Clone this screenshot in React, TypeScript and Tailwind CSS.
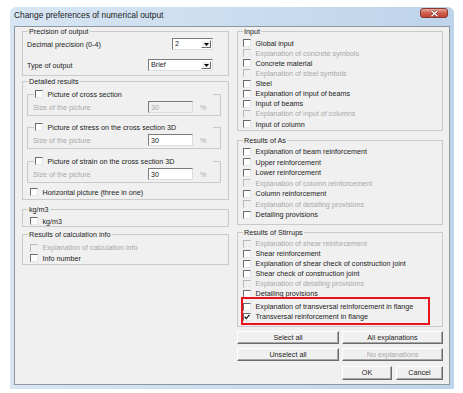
import React from 'react';

const font = "font-['Liberation_Sans',Arial,sans-serif]";

function Box({ checked, disabled }: { checked?: boolean; disabled?: boolean }) {
  const cls = disabled
    ? 'border-t-[#b9b9b9] border-l-[#b9b9b9] border-r-[#ececec] border-b-[#ececec] bg-[#f0f0f0]'
    : 'border-t-[#6b6b6b] border-l-[#6b6b6b] border-r-[#e6e6e6] border-b-[#e6e6e6] bg-white';
  return (
    <span className={`flex h-[8px] w-[8px] shrink-0 items-center justify-center border ${cls}`}>
      {checked && (
        <svg width="6" height="6" viewBox="0 0 6 6">
          <path d="M0.6 2.8 L2.3 4.6 L5.4 0.9" fill="none" stroke="#111" strokeWidth="1.3" />
        </svg>
      )}
    </span>
  );
}

function Check({
  label,
  checked,
  disabled,
  className = '',
}: {
  label: string;
  checked?: boolean;
  disabled?: boolean;
  className?: string;
}) {
  return (
    <div className={`flex items-center ${className}`}>
      <Box checked={checked} disabled={disabled} />
      <span className={`ml-[4.5px] whitespace-nowrap ${disabled ? 'text-[#a8a8a8]' : 'text-[#222]'}`}>{label}</span>
    </div>
  );
}

function Group({ title, className = '', children }: { title: string; className?: string; children: React.ReactNode }) {
  return (
    <fieldset className={`border border-[#cacaca] ${className}`}>
      <legend className="ml-[5px] px-[1px] leading-[9px]">{title}</legend>
      {children}
    </fieldset>
  );
}

function Select({ value, className = '' }: { value: string; className?: string }) {
  return (
    <div
      className={`flex h-[12px] items-stretch border border-t-[#7a7a7a] border-l-[#7a7a7a] border-r-[#dcdcdc] border-b-[#dcdcdc] bg-white ${className}`}
    >
      <span className="flex-1 pl-[2px] leading-[10px]">{value}</span>
      <span className="m-[1px] flex w-[10px] items-center justify-center border border-t-white border-l-white border-r-[#6e6e6e] border-b-[#6e6e6e] bg-[#f0f0f0]">
        <svg width="5" height="3" viewBox="0 0 5 3">
          <path d="M0 0h5L2.5 3z" fill="#000" />
        </svg>
      </span>
    </div>
  );
}

function TextBox({ value, disabled }: { value: string; disabled?: boolean }) {
  return (
    <div
      className={`flex h-[12px] w-[45px] items-center border border-t-[#7a7a7a] border-l-[#7a7a7a] border-r-[#dcdcdc] border-b-[#dcdcdc] pl-[2px] ${
        disabled ? 'bg-[#f0f0f0] text-[#a8a8a8]' : 'bg-white text-[#222]'
      }`}
    >
      {value}
    </div>
  );
}

function SubGroup({ label, disabled, className = '' }: { label: string; disabled?: boolean; className?: string }) {
  return (
    <fieldset className={`border border-[#cacaca] ${className}`}>
      <legend className="ml-[6px] w-[179px] px-[1px]">
        <Check label={label} className="h-[10px]" />
      </legend>
      <div className="mb-[2px] mt-[2px] flex h-[12px] items-center pl-[5px]">
        <span className="w-[115px] text-[#a8a8a8]">Size of the picture</span>
        <TextBox value="30" disabled={disabled} />
        <span className="ml-[7px] text-[#a8a8a8]">%</span>
      </div>
    </fieldset>
  );
}

function Btn({
  children,
  className = '',
  disabled,
}: {
  children: React.ReactNode;
  className?: string;
  disabled?: boolean;
}) {
  return (
    <div
      className={`flex items-center justify-center border border-t-white border-l-white border-r-[#6a6a6a] border-b-[#6a6a6a] bg-[#f0f0f0] shadow-[inset_-1px_-1px_0_#a8a8a8] ${
        disabled ? 'text-[#a8a8a8]' : 'text-[#222]'
      } ${className}`}
    >
      {children}
    </div>
  );
}

function CloseButton() {
  return (
    <div className="mr-[6px] mt-[1px] flex h-[10px] w-[28px] items-center justify-center rounded-[3px] border border-[#8a3a30] bg-gradient-to-b from-[#e3a89c] via-[#cf5f4e] to-[#c4412f]">
      <svg width="9" height="7" viewBox="0 0 9 7">
        <path d="M1.5 0.8 L7.5 6.2 M7.5 0.8 L1.5 6.2" stroke="#7a2a22" strokeWidth="2.6" />
        <path d="M1.5 0.8 L7.5 6.2 M7.5 0.8 L1.5 6.2" stroke="#ffffff" strokeWidth="1.5" />
      </svg>
    </div>
  );
}

const inputItems: [string, boolean][] = [
  ['Global input', false],
  ['Explanation of concrete symbols', true],
  ['Concrete material', false],
  ['Explanation of steel symbols', true],
  ['Steel', false],
  ['Explanation of input of beams', false],
  ['Input of beams', false],
  ['Explanation of input of columns', true],
  ['Input of column', false],
];

const asItems: [string, boolean][] = [
  ['Explanation of beam reinforcement', false],
  ['Upper reinforcement', false],
  ['Lower reinforcement', false],
  ['Explanation of column reinforcement', true],
  ['Column reinforcement', false],
  ['Explanation of detailing provisions', true],
  ['Detailing provisions', false],
];

const stirrupItems: [string, boolean][] = [
  ['Explanation of shear reinforcement', true],
  ['Shear reinforcement', false],
  ['Explanation of shear check of construction joint', false],
  ['Shear check of construction joint', false],
  ['Explanation of detailing provisions', true],
  ['Detailing provisions', false],
];

export default function App() {
  return (
    <div className={`h-[393px] w-[463px] bg-white pl-[10px] pt-[7px] text-[7.2px] leading-[9px] text-[#222] ${font}`}>
      <div className="flex h-[382px] w-[444px] flex-col rounded-t-[6px] bg-gradient-to-r from-[#d8e6f4] to-[#bed4eb]">
        {/* title bar */}
        <div className="flex h-[19px] shrink-0 items-start justify-between">
          <span className="ml-[4px] mt-[3px] text-[8.4px] leading-[11px] text-[#1b1b1b]">
            Change preferences of numerical output
          </span>
          <CloseButton />
        </div>

        <div className="mx-[4px] mb-[4px] flex flex-1 gap-[8px] border border-[#8f969e] bg-[#f0f0f0] pl-[7px]">
          {/* left column */}
          <div className="flex w-[207px] flex-col">
            <Group title="Precision of output">
              <div className="pb-[4px] pl-[4px] pr-[15px] pt-[2px]">
                <div className="flex h-[12px] items-center justify-between">
                  <span>Decimal precision (0-4)</span>
                  <Select value="2" className="w-[41px]" />
                </div>
                <div className="mt-[9px] flex h-[12px] items-center justify-between">
                  <span>Type of output</span>
                  <Select value="Brief" className="w-[65px]" />
                </div>
              </div>
            </Group>

            <Group title="Detailed results" className="mt-[1px]">
              <div className="flex flex-col pb-[2px] pl-[4px] pr-[7px] pt-[3px]">
                <SubGroup label="Picture of cross section" disabled />
                <SubGroup label="Picture of stress on the cross section 3D" className="mt-[6px]" />
                <SubGroup label="Picture of strain on the cross section 3D" className="mt-[7px]" />
                <Check label="Horizontal picture (three in one)" className="mt-[4px] h-[10px] pl-[3px]" />
              </div>
            </Group>

            <Group title="kg/m3" className="mt-[5px]">
              <div className="pl-[7px] pt-[2px]">
                <Check label="kg/m3" className="h-[10px]" />
              </div>
            </Group>

            <Group title="Results of calculation info" className="mt-[3px]">
              <div className="pb-[0.5px] pl-[7px] pt-[3.5px]">
                <Check label="Explanation of calculation info" disabled className="h-[10.5px]" />
                <Check label="Info number" className="h-[10.5px]" />
              </div>
            </Group>
          </div>

          {/* right column */}
          <div className="flex w-[206px] flex-col">
            <Group title="Input">
              <div className="pb-[0.5px] pl-[5px] pt-[2px]">
                {inputItems.map(([l, d]) => (
                  <Check key={l} label={l} disabled={d} className="h-[10.125px]" />
                ))}
              </div>
            </Group>

            <Group title="Results of As" className="mt-[5.5px]">
              <div className="pb-[3.5px] pl-[5px] pt-[1.2px]">
                {asItems.map(([l, d]) => (
                  <Check key={l} label={l} disabled={d} className="h-[10.55px]" />
                ))}
              </div>
            </Group>

            <Group title="Results of Stirrups" className="mt-[3.5px]">
              <div className="pb-[1px] pl-[5px] pt-[1.5px]">
                {stirrupItems.map(([l, d]) => (
                  <Check key={l} label={l} disabled={d} className="h-[10px]" />
                ))}
                <div className="relative -ml-[2px] -mt-[2px] w-[189px] border-2 border-[#e8141c] pb-[1.2px] pt-[3.3px]">
                  <Check label="Explanation of transversal reinforcement in flange" className="h-[10px]" />
                  <Check label="Transversal reinforcement in flange" checked className="h-[10px]" />
                </div>
              </div>
            </Group>

            <div className="mt-[4px] flex flex-col">
              <div className="flex gap-[3px]">
                <Btn className="h-[13px] w-[102px]">Select all</Btn>
                <Btn className="h-[13px] w-[101px]">All explanations</Btn>
              </div>
              <div className="mt-[4px] flex gap-[3px]">
                <Btn className="h-[13px] w-[102px]">Unselect all</Btn>
                <Btn className="h-[13px] w-[101px]" disabled>
                  No explanations
                </Btn>
              </div>
              <div className="mt-[4.5px] flex justify-end gap-[4px]">
                <Btn className="h-[14px] w-[50px]">OK</Btn>
                <Btn className="h-[14px] w-[47px]">Cancel</Btn>
              </div>
            </div>
          </div>
        </div>
      </div>
    </div>
  );
}
